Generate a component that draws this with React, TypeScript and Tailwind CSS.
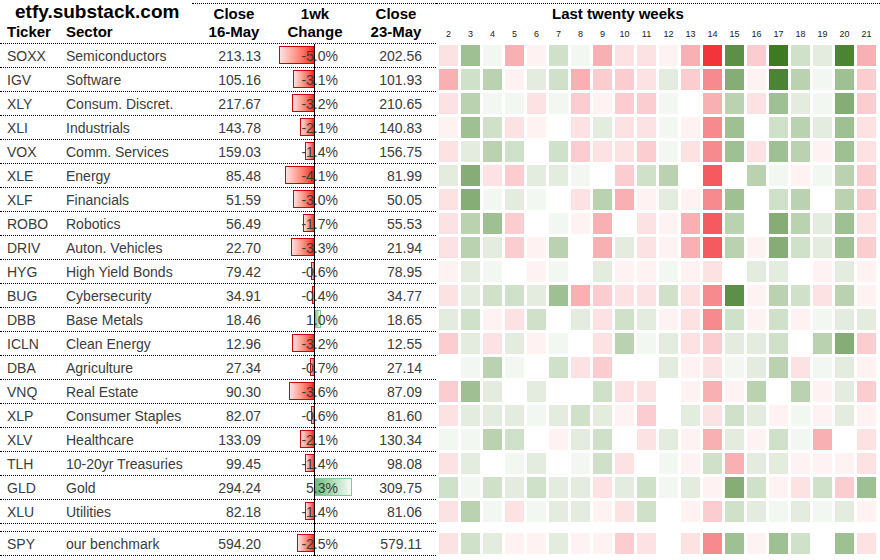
import React from "react";

type Row = {
	ticker: string;
	sector: string;
	close1: string;
	change: number;
	close2: string;
	heat: number[];
};

const rows: Row[] = [
	{ ticker: "SOXX", sector: "Semiconductors", close1: "213.13", change: -5.0, close2: "202.56", heat: [-2, 5, 1, -4, -1, 3, 1, -4, -2, -2, -1, -4, -7, 7, -3, 9, 3, 2, 8, -4] },
	{ ticker: "IGV", sector: "Software", close1: "105.16", change: -3.1, close2: "101.93", heat: [-4, 3, 4, -1, 2, 3, -4, -3, -3, -2, 2, -3, -5, 6, -1, 8, 4, 1, 5, -3] },
	{ ticker: "XLY", sector: "Consum. Discret.", close1: "217.67", change: -3.2, close2: "210.65", heat: [-2, 4, 1, 1, -2, 1, -3, -1, -3, -3, 1, 0, -4, 4, -2, 5, 2, 1, 6, -3] },
	{ ticker: "XLI", sector: "Industrials", close1: "143.78", change: -2.1, close2: "140.83", heat: [-1, 5, 3, -2, -1, 0, -2, 2, -2, -2, 1, -1, -5, 5, 0, 3, 4, 2, 5, -2] },
	{ ticker: "VOX", sector: "Comm. Services", close1: "159.03", change: -1.4, close2: "156.75", heat: [-2, 2, 4, 3, 0, 3, -3, -2, -2, -3, 1, -2, -5, 5, -2, 5, 4, -1, 5, -2] },
	{ ticker: "XLE", sector: "Energy", close1: "85.48", change: -4.1, close2: "81.99", heat: [2, 6, -2, -3, 2, 2, 1, 0, -3, 3, 4, 0, -6, 0, 4, 1, -1, 1, 4, -3] },
	{ ticker: "XLF", sector: "Financials", close1: "51.59", change: -3.0, close2: "50.05", heat: [-2, 6, 1, 2, 1, 0, -2, 4, -4, -1, 2, -1, -5, 5, 0, 3, 4, 0, 4, -3] },
	{ ticker: "ROBO", sector: "Robotics", close1: "56.49", change: -1.7, close2: "55.53", heat: [-2, 4, 5, -3, 0, 1, -1, -4, 0, -2, -1, -4, -6, 4, 0, 6, 4, 2, 5, -2] },
	{ ticker: "DRIV", sector: "Auton. Vehicles", close1: "22.70", change: -3.3, close2: "21.94", heat: [-2, 4, 2, -3, -1, 4, 0, -4, 2, -2, -1, -4, -6, 4, -1, 6, 3, 2, 5, -3] },
	{ ticker: "HYG", sector: "High Yield Bonds", close1: "79.42", change: -0.6, close2: "78.95", heat: [-1, 2, 1, 0, -1, 1, 0, 2, -1, -1, 1, -1, -2, 0, 2, 2, 0, -1, 2, -1] },
	{ ticker: "BUG", sector: "Cybersecurity", close1: "34.91", change: -0.4, close2: "34.77", heat: [-2, 2, 3, 3, 2, 5, -4, -3, -2, -2, 3, -2, -5, 7, -1, 4, 3, -2, 4, -1] },
	{ ticker: "DBB", sector: "Base Metals", close1: "18.46", change: 1.0, close2: "18.65", heat: [2, 3, -1, -2, 3, 0, 2, -2, 3, 2, -1, -2, -5, 3, -1, 3, -1, 1, 2, 2] },
	{ ticker: "ICLN", sector: "Clean Energy", close1: "12.96", change: -3.2, close2: "12.55", heat: [-3, 2, -2, 2, -1, 1, 0, -2, 4, 1, 2, -2, -3, 2, 2, 3, 0, 4, 6, -3] },
	{ ticker: "DBA", sector: "Agriculture", close1: "27.34", change: -0.7, close2: "27.14", heat: [0, 1, 4, 1, 0, 3, -2, -3, 0, 0, 2, -1, -2, 1, 2, 4, -2, 1, 2, -1] },
	{ ticker: "VNQ", sector: "Real Estate", close1: "90.30", change: -3.6, close2: "87.09", heat: [-3, 5, 2, 0, 2, 0, 0, 3, -2, -2, 0, -1, -4, -1, 4, 0, 4, -1, 2, -3] },
	{ ticker: "XLP", sector: "Consumer Staples", close1: "82.07", change: -0.6, close2: "81.60", heat: [-2, 2, 2, 2, 1, 2, 3, 2, -1, -3, 0, 2, -2, 3, 2, -1, 1, -1, 2, -1] },
	{ ticker: "XLV", sector: "Healthcare", close1: "133.09", change: -2.1, close2: "130.34", heat: [1, 1, 4, 3, 0, -1, 2, 3, 0, -2, 2, -1, -4, 2, -1, 3, 1, -4, 0, -2] },
	{ ticker: "TLH", sector: "10-20yr Treasuries", close1: "99.45", change: -1.4, close2: "98.08", heat: [-2, 2, 0, 1, 2, 0, 1, 3, -2, 0, 1, -1, 3, -4, 2, 2, -1, -1, -1, -2] },
	{ ticker: "GLD", sector: "Gold", close1: "294.24", change: 5.3, close2: "309.75", heat: [3, 1, 3, 2, 3, 2, 2, -2, 2, 3, 1, 2, -1, 6, 3, -1, -2, 3, -3, 5] },
	{ ticker: "XLU", sector: "Utilities", close1: "82.18", change: -1.4, close2: "81.06", heat: [-2, 4, 1, -2, 1, 2, 2, -1, -2, 3, 0, -1, -3, 3, 2, 1, 2, 1, 2, -1] },
];

const benchmark: Row = { ticker: "SPY", sector: "our benchmark", close1: "594.20", change: -2.5, close2: "579.11", heat: [-2, 3, 2, -1, -1, 2, -1, -1, -3, -2, 0, -2, -5, 5, -1, 5, 3, 0, 5, -2] };

const weeks = Array.from({ length: 20 }, (_, i) => i + 2);

const reds = ["#ffffff", "#fff2f3", "#fde2e4", "#fccdd0", "#f9b0b3", "#f78a8e", "#f55a60", "#f3343b"];
const greens = ["#ffffff", "#f3f7f1", "#e3ecdf", "#d0e1ca", "#bad2b0", "#9fc093", "#86ad76", "#5c8f48", "#4a8434", "#3d7a22"];

const heatColor = (v: number) => (v < 0 ? reds[-v] : greens[v]);

// px per percent point of the data bar
const SCALE = 7.2;

const ChangeCell = ({ value }: { value: number }) => {
	const w = Math.round(Math.abs(value) * SCALE);
	return (
		<div className="relative flex w-[80px] items-end justify-end pb-[3px] pr-[6px]">
			{value < 0 ? (
				<div
					className="absolute right-[29px] top-[2px] h-[18px] border border-[#d00000] bg-linear-to-r from-[#ffe0e0] to-[#ff0000]"
					style={{ width: w }}
				/>
			) : (
				<div
					className="absolute left-[50px] top-[2px] h-[18px] border border-[#80c994] bg-linear-to-r from-[#63be7b] to-[#f6fbf7]"
					style={{ width: w }}
				/>
			)}
			<div className="absolute -bottom-px left-[50px] top-0 w-px bg-black" />
			<span className="relative">{value.toFixed(1)}%</span>
		</div>
	);
};

const DataRow = ({ row }: { row: Row }) => (
	<div className="flex h-[24px]">
		<div className="flex w-[436px] border-b border-dotted border-black text-[14px] leading-[16px] text-[#3c3c3c]">
			<div className="flex w-[66px] items-end pb-[3px] pl-[7px]">{row.ticker}</div>
			<div className="flex w-[126px] items-end pb-[3px]">{row.sector}</div>
			<div className="flex w-[72px] items-end justify-end pb-[3px] pr-[3px]">{row.close1}</div>
			<ChangeCell value={row.change} />
			<div className="flex w-[92px] items-end justify-end pb-[3px] pr-[14px]">{row.close2}</div>
		</div>
		<div className="grid grid-cols-[repeat(20,19px)] gap-x-[3px] pl-[3px] pt-[1px]">
			{row.heat.map((v, i) => (
				<div key={i} className="h-[21px]" style={{ backgroundColor: heatColor(v) }} />
			))}
		</div>
	</div>
);

export default function App() {
	return (
		<div className="h-[560px] w-[880px] overflow-hidden bg-white font-['Liberation_Sans',Arial,sans-serif]">
			{/* header */}
			<div className="flex h-[44px]">
				<div className="flex w-[436px] border-b border-dotted border-black">
					<div className="flex w-[192px] flex-col">
						<div className="mt-[2px] pl-[15px] text-[19px] font-bold leading-[19px] text-black">
							etfy.substack.com
						</div>
						<div className="mt-[2px] flex text-[15px] font-bold leading-[18px] text-black">
							<span className="w-[66px] pl-[7px]">Ticker</span>
							<span>Sector</span>
						</div>
					</div>
					<div className="mt-[3px] flex flex-1 border-t border-dotted border-black pt-[1px] text-center text-[15px] font-bold leading-[18px] text-black">
						<div className="w-[72px] pl-[12px]">
							Close
							<br />
							16-May
						</div>
						<div className="w-[80px] pl-[22px]">
							1wk
							<br />
							Change
						</div>
						<div className="w-[92px] pl-[12px]">
							Close
							<br />
							23-May
						</div>
					</div>
				</div>
				<div className="mt-[3px] flex-1 border-t border-dotted border-black pt-[1px]">
					<div className="pl-[116px] text-[15px] font-bold leading-[18px] text-black">Last twenty weeks</div>
					<div className="mt-[2px] grid grid-cols-[repeat(20,19px)] gap-x-[3px] pl-[3px] text-center text-[9px] leading-[18px] text-[#222]">
						{weeks.map((w) => (
							<span key={w}>{w}</span>
						))}
					</div>
				</div>
			</div>

			{rows.map((r) => (
				<DataRow key={r.ticker} row={r} />
			))}

			{/* spacer before benchmark */}
			<div className="flex h-[8px]">
				<div className="relative w-[436px] border-b border-dotted border-black">
					<div className="absolute -bottom-px left-[314px] top-0 w-px bg-black" />
				</div>
			</div>

			<DataRow row={benchmark} />
		</div>
	);
}
